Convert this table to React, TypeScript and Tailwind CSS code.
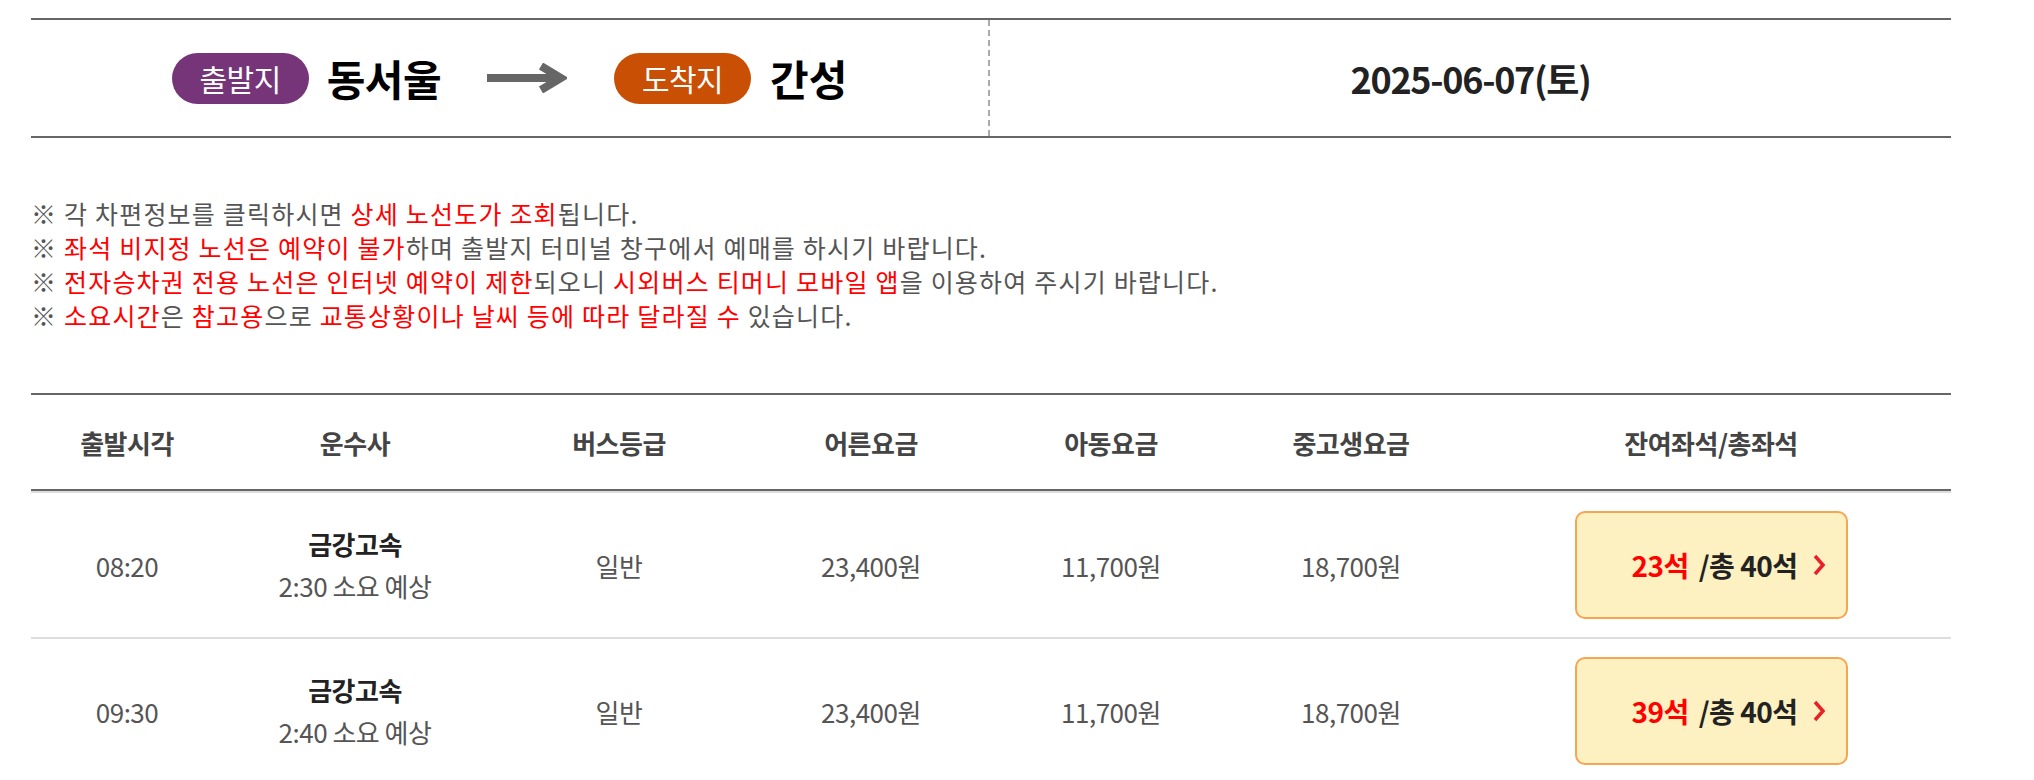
import React from "react";

const font = { fontFamily: '"Noto Sans CJK KR", "Noto Sans", sans-serif' };

function Arrow() {
  return (
    <svg width="80" height="30" viewBox="0 0 80 30" className="block">
      <rect x="0" y="11" width="70" height="8" fill="#666" />
      <polyline points="54,3 74,15 54,27" fill="none" stroke="#666" strokeWidth="8" strokeLinejoin="miter" />
    </svg>
  );
}

function Chevron() {
  return (
    <svg width="14" height="24" viewBox="0 0 14 24" className="block">
      <polyline points="3,3 11,12 3,21" fill="none" stroke="#e8202a" strokeWidth="3.5" />
    </svg>
  );
}

const R = ({ children }: { children: React.ReactNode }) => <span className="text-[#ff0000]">{children}</span>;

type Row = { time: string; dur: string; remain: string };
const rows: Row[] = [
  { time: "08:20", dur: "2:30 소요 예상", remain: "23석" },
  { time: "09:30", dur: "2:40 소요 예상", remain: "39석" },
];

const cols = "grid grid-cols-[192px_264px_264px_240px_240px_240px_480px]";

export default function App() {
  return (
    <div className="w-[2034px] h-[780px] overflow-hidden bg-white pt-[18px] pl-[31px]" style={font}>
      <div className="w-[1920px]">
        {/* route header */}
        <div className="flex h-[120px] border-y-2 border-[#666]">
          <div className="flex w-[959px] items-center justify-center border-r-2 border-dashed border-[#aaa]">
            <div className="flex h-[51px] w-[137px] items-center justify-center rounded-full bg-[#773579] text-[30px] tracking-[-0.5px] text-white">
              출발지
            </div>
            <div className="ml-[18px] text-[42px] font-bold leading-none tracking-[-0.5px] text-black">동서울</div>
            <div className="ml-[46px]">
              <Arrow />
            </div>
            <div className="ml-[47px] flex h-[51px] w-[137px] items-center justify-center rounded-full bg-[#c94f05] text-[30px] tracking-[-0.5px] text-white">
              도착지
            </div>
            <div className="ml-[19px] text-[42px] font-bold leading-none text-black">간성</div>
          </div>
          <div className="flex flex-1 items-center justify-center text-[36px] font-bold tracking-[-1.3px] text-[#222]">
            2025-06-07(토)
          </div>
        </div>

        {/* notices */}
        <div className="mt-[58px] text-[25px] leading-[34px] tracking-[1.2px] text-[#555]">
          <p>※ 각 차편정보를 클릭하시면 <R>상세 노선도가 조회</R>됩니다.</p>
          <p>※ <R>좌석 비지정 노선은 예약이 불가</R>하며 출발지 터미널 창구에서 예매를 하시기 바랍니다.</p>
          <p>
            ※ <R>전자승차권 전용 노선은 인터넷 예약이 제한</R>되오니 <R>시외버스 티머니 모바일 앱</R>을 이용하여 주시기 바랍니다.
          </p>
          <p>
            ※ <R>소요시간</R>은 <R>참고용</R>으로 <R>교통상황이나 날씨 등에 따라 달라질 수</R> 있습니다.
          </p>
        </div>

        {/* table */}
        <div className="mt-[61px]">
          <div className={`${cols} h-[98px] items-center border-y-2 border-[#666] text-center text-[26px] font-bold tracking-[-0.5px] text-[#444]`}>
            <div>출발시각</div>
            <div>운수사</div>
            <div>버스등급</div>
            <div>어른요금</div>
            <div>아동요금</div>
            <div>중고생요금</div>
            <div>잔여좌석/총좌석</div>
          </div>
          {rows.map((r) => (
            <div key={r.time} className={`${cols} h-[146px] items-center border-t-2 border-[#ddd] text-center text-[26px] tracking-[-0.5px] text-[#555]`}>
              <div>{r.time}</div>
              <div className="flex flex-col items-center">
                <div className="font-bold leading-[36px] text-[#222]">금강고속</div>
                <div className="mt-[6px] leading-[36px]">{r.dur}</div>
              </div>
              <div>일반</div>
              <div>23,400원</div>
              <div>11,700원</div>
              <div>18,700원</div>
              <div className="flex justify-center">
                <div className="flex h-[108px] w-[273px] items-center justify-end rounded-[10px] border-2 border-[#f6a552] bg-[#fdf0c1] pr-[20px] text-[28px] font-bold tracking-[-0.5px] text-[#222]">
                  <span className="text-[#ff0000]">{r.remain}</span>
                  <span className="ml-[10px]">/총 40석</span>
                  <span className="ml-[14px]">
                    <Chevron />
                  </span>
                </div>
              </div>
            </div>
          ))}
        </div>
      </div>
    </div>
  );
}
